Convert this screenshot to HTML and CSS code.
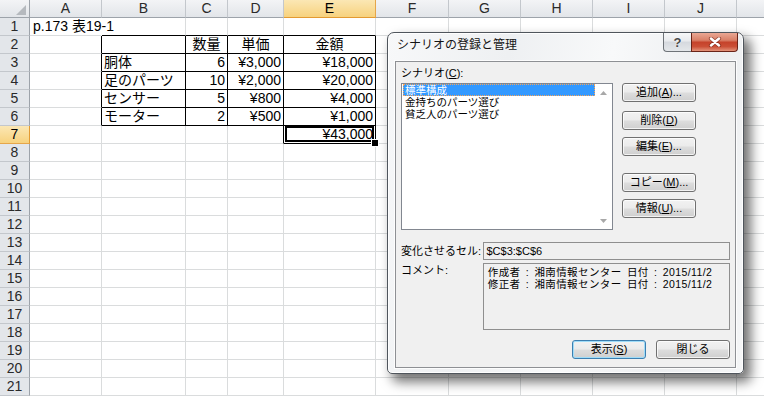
FILE: index.html
```html
<!DOCTYPE html>
<html lang="ja">
<head>
<meta charset="utf-8">
<title>シナリオの登録と管理</title>
<link rel="stylesheet" href="styles.css">
</head>
<body>
<div class="sheet">
  <div class="row hdr">
    <span class="corner"><svg width="10" height="10" viewBox="0 0 10 10"><polygon points="10,0 10,10 0,10" fill="#b5b9be"/></svg></span>
    <span>A</span><span>B</span><span>C</span><span>D</span><span class="hsel">E</span><span>F</span><span>G</span><span>H</span><span>I</span><span>J</span><span></span>
  </div>
  <div class="row"><span class="rh">1</span><span class="ov">p.173 表19-1</span><span class="kt"></span><span class="kt"></span><span class="kt"></span><span class="kt"></span><span></span><span></span><span></span><span></span><span></span><span></span></div>
  <div class="row"><span class="rh">2</span><span class="kl"></span><span class="k"></span><span class="k c">数量</span><span class="k c">単価</span><span class="k c">金額</span><span></span><span></span><span></span><span></span><span></span><span></span></div>
  <div class="row"><span class="rh">3</span><span class="kl"></span><span class="k">胴体</span><span class="k r">6</span><span class="k r">¥3,000</span><span class="k r">¥18,000</span><span></span><span></span><span></span><span></span><span></span><span></span></div>
  <div class="row"><span class="rh">4</span><span class="kl"></span><span class="k">足のパーツ</span><span class="k r">10</span><span class="k r">¥2,000</span><span class="k r">¥20,000</span><span></span><span></span><span></span><span></span><span></span><span></span></div>
  <div class="row"><span class="rh">5</span><span class="kl"></span><span class="k">センサー</span><span class="k r">5</span><span class="k r">¥800</span><span class="k r">¥4,000</span><span></span><span></span><span></span><span></span><span></span><span></span></div>
  <div class="row"><span class="rh">6</span><span class="kl"></span><span class="k">モーター</span><span class="k r">2</span><span class="k r">¥500</span><span class="k r">¥1,000</span><span></span><span></span><span></span><span></span><span></span><span></span></div>
  <div class="row"><span class="rh rsel">7</span><span></span><span></span><span></span><span class="kl"></span><span class="k r active">¥43,000</span><span></span><span></span><span></span><span></span><span></span><span></span></div>
  <div class="row"><span class="rh">8</span><span></span><span></span><span></span><span></span><span></span><span></span><span></span><span></span><span></span><span></span><span></span></div>
  <div class="row"><span class="rh">9</span><span></span><span></span><span></span><span></span><span></span><span></span><span></span><span></span><span></span><span></span><span></span></div>
  <div class="row"><span class="rh">10</span><span></span><span></span><span></span><span></span><span></span><span></span><span></span><span></span><span></span><span></span><span></span></div>
  <div class="row"><span class="rh">11</span><span></span><span></span><span></span><span></span><span></span><span></span><span></span><span></span><span></span><span></span><span></span></div>
  <div class="row"><span class="rh">12</span><span></span><span></span><span></span><span></span><span></span><span></span><span></span><span></span><span></span><span></span><span></span></div>
  <div class="row"><span class="rh">13</span><span></span><span></span><span></span><span></span><span></span><span></span><span></span><span></span><span></span><span></span><span></span></div>
  <div class="row"><span class="rh">14</span><span></span><span></span><span></span><span></span><span></span><span></span><span></span><span></span><span></span><span></span><span></span></div>
  <div class="row"><span class="rh">15</span><span></span><span></span><span></span><span></span><span></span><span></span><span></span><span></span><span></span><span></span><span></span></div>
  <div class="row"><span class="rh">16</span><span></span><span></span><span></span><span></span><span></span><span></span><span></span><span></span><span></span><span></span><span></span></div>
  <div class="row"><span class="rh">17</span><span></span><span></span><span></span><span></span><span></span><span></span><span></span><span></span><span></span><span></span><span></span></div>
  <div class="row"><span class="rh">18</span><span></span><span></span><span></span><span></span><span></span><span></span><span></span><span></span><span></span><span></span><span></span></div>
  <div class="row"><span class="rh">19</span><span></span><span></span><span></span><span></span><span></span><span></span><span></span><span></span><span></span><span></span><span></span></div>
  <div class="row"><span class="rh">20</span><span></span><span></span><span></span><span></span><span></span><span></span><span></span><span></span><span></span><span></span><span></span></div>
  <div class="row"><span class="rh">21</span><span></span><span></span><span></span><span></span><span></span><span></span><span></span><span></span><span></span><span></span><span></span></div>
</div>

<div class="dialog">
  <div class="titlebar">
    <div class="title">シナリオの登録と管理</div>
    <div class="caps">
      <div class="cap help">?</div>
      <div class="cap close"><svg width="14" height="10" viewBox="0 0 14 10"><path d="M3 1.5 L11 8.5 M11 1.5 L3 8.5" stroke="#6b1f12" stroke-width="4.2" stroke-linecap="round" fill="none" opacity="0.55"/><path d="M3 1.5 L11 8.5 M11 1.5 L3 8.5" stroke="#ffffff" stroke-width="2.4" stroke-linecap="round" fill="none"/></svg></div>
    </div>
  </div>
  <div class="client">
    <div class="lbl top">シナリオ(<u>C</u>):</div>
    <div class="top-area">
      <div class="listbox">
        <div class="items">
          <div class="item sel">標準構成</div>
          <div class="item">金持ちのパーツ選び</div>
          <div class="item">貧乏人のパーツ選び</div>
        </div>
        <div class="vscroll">
          <div class="arrow"><svg width="7" height="4" viewBox="0 0 7 4"><polygon points="3.5,0 7,4 0,4" fill="#a8a8a8"/></svg></div>
          <div class="arrow"><svg width="7" height="4" viewBox="0 0 7 4"><polygon points="0,0 7,0 3.5,4" fill="#a8a8a8"/></svg></div>
        </div>
      </div>
      <div class="side">
        <div class="btn">追加(<u>A</u>)...</div>
        <div class="btn g9">削除(<u>D</u>)</div>
        <div class="btn g7">編集(<u>E</u>)...</div>
        <div class="btn g17">コピー(<u>M</u>)...</div>
        <div class="btn g7">情報(<u>U</u>)...</div>
      </div>
    </div>
    <div class="frow cells">
      <div class="lbl">変化させるセル:</div>
      <div class="field">$C$3:$C$6</div>
    </div>
    <div class="frow comment">
      <div class="lbl">コメント:</div>
      <div class="cbox">
        <div>作成者 : 湘南情報センター 日付 : 2015/11/2</div>
        <div>修正者 : 湘南情報センター 日付 : 2015/11/2</div>
      </div>
    </div>
    <div class="bottom">
      <div class="btn default">表示(<u>S</u>)</div>
      <div class="btn">閉じる</div>
    </div>
  </div>
</div>
</body>
</html>
```

FILE: styles.css
```css
* { box-sizing: border-box; margin: 0; padding: 0; }
html, body { width: 764px; height: 396px; overflow: hidden; background: #ffffff; }
body { font-family: "Liberation Sans", "Noto Sans CJK JP", sans-serif; position: relative; color: #000; }

.sheet { display: flex; flex-direction: column; }
.row {
  display: grid;
  grid-template-columns: 30px 72px 84px 42px 56px 92px 73px 72px 72px 72px 72px 27px;
  height: 18px;
}
.row > span {
  border-right: 1px solid #dadcdd;
  border-bottom: 1px solid #dadcdd;
  font-size: 14px;
  line-height: 17px;
  padding: 0 2px;
  white-space: nowrap;
  position: relative;
}
.row > span:last-child { border-right: none; }

.hdr > span {
  background: linear-gradient(#f3f4f6, #e2e5e9);
  border-right-color: #c3c7cc;
  border-bottom-color: #9da3aa;
  text-align: center;
  color: #2a2a2a;
}
.hdr > span.corner {
  display: flex;
  justify-content: flex-end;
  align-items: flex-end;
  padding: 0 3px 2px 0;
  border-right-color: #9da3aa;
}
.hdr > span.hsel {
  background: linear-gradient(#fbe7b4, #f7d27e);
  border-right-color: #e5a64a;
  border-bottom-color: #e39a32;
  color: #000;
}

.row > span.rh {
  background: #e3e6ea;
  border-right-color: #9da3aa;
  border-bottom-color: #c3c7cc;
  text-align: center;
  color: #2a2a2a;
  padding: 0;
}
.row > span.rsel {
  background: linear-gradient(#fbe7b4, #f7d27e);
  border-right-color: #e39a32;
  border-bottom-color: #e5a64a;
  color: #000;
}

.row > span.ov { overflow: visible; border-right-color: transparent; z-index: 1; padding-left: 3px; }
.row > span.kt { border-bottom-color: #000; }
.row > span.kl { border-right-color: #000; }
.row > span.k { border-right-color: #000; border-bottom-color: #000; }
.c { text-align: center; }
.r { text-align: right; }

.active::before {
  content: "";
  position: absolute;
  left: 1px; top: 0; right: 1px; bottom: 1px;
  border: 2px solid #000;
}
.active::after {
  content: "";
  position: absolute;
  right: -4px; bottom: -4px;
  width: 6px; height: 6px;
  background: #000;
  border: 1px solid #fff;
  z-index: 2;
}

/* dialog */
.dialog {
  position: absolute;
  left: 387px; top: 32px;
  width: 357px; height: 342px;
  border: 1px solid #4f555c;
  border-radius: 7px 7px 5px 5px;
  background: linear-gradient(100deg, #f7f8f9 0%, #eef0f2 30%, #f8f9fa 55%, #eceef0 80%, #f5f6f7 100%);
  box-shadow: 6px 7px 12px 1px rgba(0, 0, 0, 0.55), inset 0 0 0 1px rgba(255, 255, 255, 0.9);
  display: flex;
  flex-direction: column;
  z-index: 10;
}
.titlebar { height: 28px; display: flex; align-items: flex-start; }
.title {
  flex: 1;
  font-size: 12px;
  line-height: 12px;
  padding: 6px 0 0 9px;
  color: #151515;
}
.caps { display: flex; margin-right: 5px; }
.cap { height: 19px; display: flex; align-items: center; justify-content: center; }
.help {
  width: 28px;
  border: 1px solid #6e7378;
  border-top: none;
  border-right: none;
  border-radius: 0 0 0 4px;
  background: linear-gradient(#f7f8f9 0%, #e8eaed 45%, #d5d9de 50%, #e4e7ea 100%);
  font-weight: bold;
  font-size: 13px;
  color: #4a4a4a;
  text-shadow: 0 0 2px #fff;
}
.close {
  width: 47px;
  border: 1px solid #6a2418;
  border-top: none;
  border-radius: 0 0 4px 0;
  background: linear-gradient(#eaa894 0%, #d98068 40%, #c5432b 52%, #cb4f36 75%, #e3937a 100%);
}

.client {
  margin: 0 7px 0 7px;
  height: 307px;
  background: #f0f0f0;
  border: 1px solid #8e9094;
  box-shadow: 0 0 0 1px rgba(255, 255, 255, 0.8);
  padding: 0 5px;
  display: flex;
  flex-direction: column;
  font-size: 11px;
  line-height: 12px;
}
.lbl { font-size: 11px; line-height: 12px; color: #000; white-space: nowrap; }
.lbl.top { margin-top: 5px; height: 12px; }

.top-area { display: flex; gap: 9px; margin-top: 4px; }
.listbox {
  width: 212px;
  height: 147px;
  border: 1px solid #828790;
  background: #fff;
  display: flex;
}
.items { flex: 1; padding: 0 0 0 1px; }
.item { height: 12px; font-size: 10.5px; line-height: 12px; padding-left: 2px; white-space: nowrap; }
.item.sel {
  background: #3399ff;
  color: #fff;
  outline: 1px dotted #f7a55a;
  outline-offset: -1px;
}
.vscroll { width: 17px; display: flex; flex-direction: column; justify-content: space-between; }
.arrow { height: 17px; display: flex; align-items: center; justify-content: center; }

.side { display: flex; flex-direction: column; }
.btn {
  width: 74px;
  height: 19px;
  border: 1px solid #707070;
  border-radius: 3px;
  background: linear-gradient(#f2f2f2 0%, #ebebeb 48%, #dddddd 52%, #cfcfcf 100%);
  box-shadow: inset 0 0 0 1px rgba(255, 255, 255, 0.75);
  text-align: center;
  font-size: 11px;
  line-height: 17px;
  color: #000;
  white-space: nowrap;
}
.g9 { margin-top: 9px; }
.g7 { margin-top: 7px; }
.g17 { margin-top: 17px; }
.btn.default {
  border-color: #3c7fb1;
  box-shadow: inset 0 0 0 1px #9fdcf8;
}

.frow { display: flex; }
.frow .lbl { width: 82px; }
.cells { margin-top: 12px; align-items: center; }
.field {
  width: 249px;
  height: 18px;
  border: 1px solid #8f8f8f;
  background: #f0f0f0;
  padding-left: 3px;
  line-height: 16px;
}
.comment { margin-top: 3px; }
.comment .lbl { padding-top: 1px; }
.cbox {
  width: 248px;
  height: 67px;
  border: 1px solid #8f8f8f;
  background: #f0f0f0;
  padding: 2px 0 0 4px;
  font-size: 10.5px;
  line-height: 12px;
  letter-spacing: 0.4px;
  word-spacing: 2px;
  white-space: nowrap;
}
.bottom { display: flex; justify-content: flex-end; gap: 10px; margin-top: 10px; }
```
